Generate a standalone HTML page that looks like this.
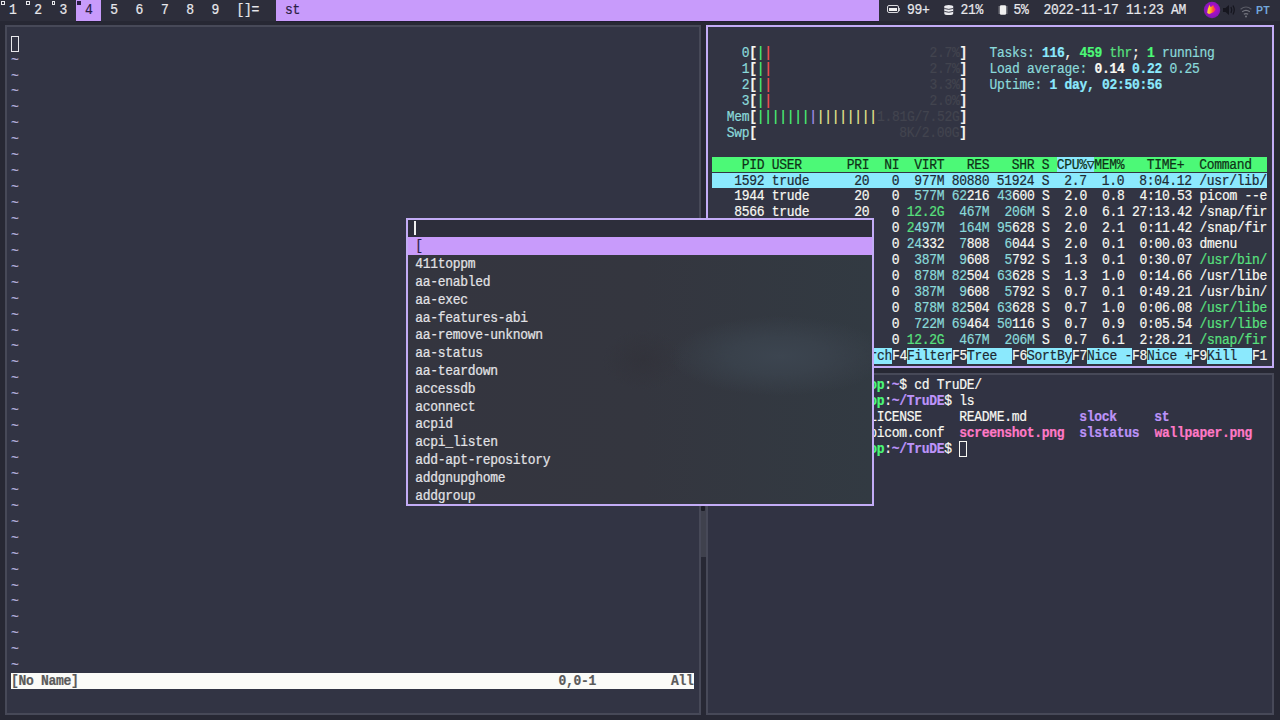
<!DOCTYPE html>
<html><head><meta charset="utf-8"><style>
html,body{margin:0;padding:0;width:1280px;height:720px;overflow:hidden;background:#272834;}
.r{position:absolute;white-space:pre;transform:scaleY(1.06);-webkit-text-stroke:0.2px currentColor;transform-origin:0 12px;font-family:"Liberation Mono",monospace;font-size:13px;letter-spacing:-0.3012px;line-height:15.9375px;color:#f8f8f2;}
</style></head><body>
<div style="position:absolute;left:0.000px;top:0.000px;width:1280.000px;height:20.625px;background:#2d2e3b"></div>
<div style="position:absolute;left:75.990px;top:0.000px;width:25.330px;height:20.625px;background:#c89bfb"></div>
<div class="r" style="left:8.915px;top:1.200px;line-height:20px"><span style="color:#e8e8ec">1</span></div>
<div class="r" style="left:34.245px;top:1.200px;line-height:20px"><span style="color:#e8e8ec">2</span></div>
<div class="r" style="left:59.575px;top:1.200px;line-height:20px"><span style="color:#e8e8ec">3</span></div>
<div class="r" style="left:84.905px;top:1.200px;line-height:20px"><span style="color:#2a1d45">4</span></div>
<div class="r" style="left:110.235px;top:1.200px;line-height:20px"><span style="color:#e8e8ec">5</span></div>
<div class="r" style="left:135.565px;top:1.200px;line-height:20px"><span style="color:#e8e8ec">6</span></div>
<div class="r" style="left:160.895px;top:1.200px;line-height:20px"><span style="color:#e8e8ec">7</span></div>
<div class="r" style="left:186.225px;top:1.200px;line-height:20px"><span style="color:#e8e8ec">8</span></div>
<div class="r" style="left:211.555px;top:1.200px;line-height:20px"><span style="color:#e8e8ec">9</span></div>
<div style="position:absolute;left:1.000px;top:1.000px;width:3.800px;height:3.800px;border:1px solid #e8e8ec;box-sizing:border-box"></div>
<div style="position:absolute;left:26.330px;top:1.000px;width:3.800px;height:3.800px;border:1px solid #e8e8ec;box-sizing:border-box"></div>
<div style="position:absolute;left:51.660px;top:1.000px;width:3.800px;height:3.800px;border:1px solid #e8e8ec;box-sizing:border-box"></div>
<div style="position:absolute;left:76.990px;top:1.000px;width:3.800px;height:3.800px;background:#2a1d45"></div>
<div class="r" style="left:236.500px;top:1.200px;line-height:20px"><span style="color:#e8e8ec">[]=</span></div>
<div style="position:absolute;left:276.000px;top:0.000px;width:603.000px;height:20.625px;background:#c89bfb"></div>
<div class="r" style="left:285.000px;top:1.200px;line-height:20px"><span style="color:#2a1d45">st</span></div>
<div class="r" style="left:907.000px;top:1.200px;line-height:20px"><span style="color:#e8e8ec">99+</span></div>
<div class="r" style="left:960.500px;top:1.200px;line-height:20px"><span style="color:#e8e8ec">21%</span></div>
<div class="r" style="left:1013.500px;top:1.200px;line-height:20px"><span style="color:#e8e8ec">5%</span></div>
<div class="r" style="left:1043.500px;top:1.200px;line-height:20px"><span style="color:#e8e8ec">2022-11-17 11:23 AM</span></div>
<div style="position:absolute;left:887.000px;top:5.300px;width:12.000px;height:8.000px;border:1.3px solid #d8d8dc;border-radius:2px;box-sizing:border-box"></div>
<div style="position:absolute;left:889.000px;top:7.800px;width:8.000px;height:3.000px;background:#f0f0f0"></div>
<div style="position:absolute;left:899.000px;top:7.800px;width:1.200px;height:3.000px;background:#b8b8bc"></div>
<svg style="position:absolute;left:944px;top:4.6px" width="9.5" height="10" viewBox="0 0 9.5 10"><path d="M0.3 1.6 Q0.3 0 4.75 0 Q9.2 0 9.2 1.6 V8.4 Q9.2 10 4.75 10 Q0.3 10 0.3 8.4Z" fill="#ececf0"/><path d="M0.3 3.5 Q4.75 5.2 9.2 3.5" stroke="#2d2e3b" stroke-width="0.9" fill="none"/><path d="M0.3 6.4 Q4.75 8.1 9.2 6.4" stroke="#2d2e3b" stroke-width="0.9" fill="none"/></svg>
<svg style="position:absolute;left:997.5px;top:4.5px" width="10" height="10" viewBox="0 0 10 10"><rect x="2" y="0.3" width="6" height="9.4" rx="1" fill="#f0f0f0"/><g stroke="#c8c8cc" stroke-width="0.9"><line x1="0.5" y1="2" x2="2" y2="2"/><line x1="0.5" y1="4" x2="2" y2="4"/><line x1="0.5" y1="6" x2="2" y2="6"/><line x1="0.5" y1="8" x2="2" y2="8"/><line x1="8" y1="2" x2="9.5" y2="2"/><line x1="8" y1="4" x2="9.5" y2="4"/><line x1="8" y1="6" x2="9.5" y2="6"/><line x1="8" y1="8" x2="9.5" y2="8"/></g></svg>
<svg style="position:absolute;left:1203px;top:1px" width="18" height="18" viewBox="0 0 18 18"><defs><radialGradient id="ffc" cx="0.55" cy="0.45" r="0.55"><stop offset="0" stop-color="#e0108a"/><stop offset="0.5" stop-color="#a010c8"/><stop offset="1" stop-color="#8018b0"/></radialGradient><linearGradient id="ffl" x1="0" y1="0" x2="1" y2="0"><stop offset="0" stop-color="#ffe23a"/><stop offset="0.4" stop-color="#ffb020"/><stop offset="0.7" stop-color="#ff5a30"/><stop offset="1" stop-color="#ff1a8a"/></linearGradient></defs><circle cx="9" cy="9" r="8.2" fill="url(#ffc)"/><path d="M4.2 11.8 Q4.4 8 5.8 5.5 L6.5 3.8 Q7.2 5.8 8 6.3 Q9 4.5 10.4 4.2 Q10.6 6.5 12.6 8.5 Q11.5 11 8.2 12.2 Q5.5 13.8 4.2 11.8Z" fill="url(#ffl)"/></svg>
<svg style="position:absolute;left:1222px;top:4px" width="14" height="12" viewBox="0 0 14 12"><path d="M1 4 H3.5 L7 1 V11 L3.5 8 H1Z" fill="#16161f"/><path d="M9 3 Q10.5 6 9 9" stroke="#16161f" stroke-width="1.3" fill="none"/><path d="M11 1.5 Q13.5 6 11 10.5" stroke="#16161f" stroke-width="1.3" fill="none"/></svg>
<svg style="position:absolute;left:1239.5px;top:4px" width="12" height="15" viewBox="0 0 12 15"><path d="M0.6 5.2 Q6 0.8 11.4 5.2" stroke="#5a5b66" stroke-width="1.2" fill="none"/><path d="M2.2 7.8 Q6 5 9.8 7.8" stroke="#74757f" stroke-width="1.2" fill="none"/><path d="M3.8 10.3 Q6 8.8 8.2 10.3" stroke="#74757f" stroke-width="1.2" fill="none"/><circle cx="6" cy="12.6" r="1" fill="#74757f"/></svg>
<div style="position:absolute;left:1256px;top:2.5px;font:bold 10.5px 'Liberation Sans',sans-serif;color:#72a6da;line-height:14px;letter-spacing:0.3px">PT</div>
<div style="position:absolute;left:5.000px;top:25.000px;width:696.000px;height:690.300px;background:#323444;border:2px solid #474958;box-sizing:border-box"></div>
<div style="position:absolute;left:705.700px;top:25.000px;width:568.600px;height:343.300px;background:#323443;border:2px solid #c3acf6;box-sizing:border-box"></div>
<div style="position:absolute;left:705.700px;top:373.200px;width:568.600px;height:342.100px;background:#313343;border:2px solid #474958;box-sizing:border-box"></div>
<div style="position:absolute;left:75.990px;top:20.625px;width:25.330px;height:1.400px;background:#221d33"></div>
<div style="position:absolute;left:276.000px;top:20.625px;width:603.000px;height:1.400px;background:#221d33"></div>
<div style="position:absolute;left:11.000px;top:35.625px;width:7.500px;height:15.938px;border:1px solid #e8e8ec;box-sizing:border-box"></div>
<div class="r" style="left:11.000px;top:52.562px;"><span style="color:#b4b0dc">~</span></div>
<div class="r" style="left:11.000px;top:68.500px;"><span style="color:#b4b0dc">~</span></div>
<div class="r" style="left:11.000px;top:84.438px;"><span style="color:#b4b0dc">~</span></div>
<div class="r" style="left:11.000px;top:100.375px;"><span style="color:#b4b0dc">~</span></div>
<div class="r" style="left:11.000px;top:116.312px;"><span style="color:#b4b0dc">~</span></div>
<div class="r" style="left:11.000px;top:132.250px;"><span style="color:#b4b0dc">~</span></div>
<div class="r" style="left:11.000px;top:148.188px;"><span style="color:#b4b0dc">~</span></div>
<div class="r" style="left:11.000px;top:164.125px;"><span style="color:#b4b0dc">~</span></div>
<div class="r" style="left:11.000px;top:180.062px;"><span style="color:#b4b0dc">~</span></div>
<div class="r" style="left:11.000px;top:196.000px;"><span style="color:#b4b0dc">~</span></div>
<div class="r" style="left:11.000px;top:211.938px;"><span style="color:#b4b0dc">~</span></div>
<div class="r" style="left:11.000px;top:227.875px;"><span style="color:#b4b0dc">~</span></div>
<div class="r" style="left:11.000px;top:243.812px;"><span style="color:#b4b0dc">~</span></div>
<div class="r" style="left:11.000px;top:259.750px;"><span style="color:#b4b0dc">~</span></div>
<div class="r" style="left:11.000px;top:275.688px;"><span style="color:#b4b0dc">~</span></div>
<div class="r" style="left:11.000px;top:291.625px;"><span style="color:#b4b0dc">~</span></div>
<div class="r" style="left:11.000px;top:307.562px;"><span style="color:#b4b0dc">~</span></div>
<div class="r" style="left:11.000px;top:323.500px;"><span style="color:#b4b0dc">~</span></div>
<div class="r" style="left:11.000px;top:339.438px;"><span style="color:#b4b0dc">~</span></div>
<div class="r" style="left:11.000px;top:355.375px;"><span style="color:#b4b0dc">~</span></div>
<div class="r" style="left:11.000px;top:371.312px;"><span style="color:#b4b0dc">~</span></div>
<div class="r" style="left:11.000px;top:387.250px;"><span style="color:#b4b0dc">~</span></div>
<div class="r" style="left:11.000px;top:403.188px;"><span style="color:#b4b0dc">~</span></div>
<div class="r" style="left:11.000px;top:419.125px;"><span style="color:#b4b0dc">~</span></div>
<div class="r" style="left:11.000px;top:435.062px;"><span style="color:#b4b0dc">~</span></div>
<div class="r" style="left:11.000px;top:451.000px;"><span style="color:#b4b0dc">~</span></div>
<div class="r" style="left:11.000px;top:466.938px;"><span style="color:#b4b0dc">~</span></div>
<div class="r" style="left:11.000px;top:482.875px;"><span style="color:#b4b0dc">~</span></div>
<div class="r" style="left:11.000px;top:498.812px;"><span style="color:#b4b0dc">~</span></div>
<div class="r" style="left:11.000px;top:514.750px;"><span style="color:#b4b0dc">~</span></div>
<div class="r" style="left:11.000px;top:530.688px;"><span style="color:#b4b0dc">~</span></div>
<div class="r" style="left:11.000px;top:546.625px;"><span style="color:#b4b0dc">~</span></div>
<div class="r" style="left:11.000px;top:562.562px;"><span style="color:#b4b0dc">~</span></div>
<div class="r" style="left:11.000px;top:578.500px;"><span style="color:#b4b0dc">~</span></div>
<div class="r" style="left:11.000px;top:594.438px;"><span style="color:#b4b0dc">~</span></div>
<div class="r" style="left:11.000px;top:610.375px;"><span style="color:#b4b0dc">~</span></div>
<div class="r" style="left:11.000px;top:626.312px;"><span style="color:#b4b0dc">~</span></div>
<div class="r" style="left:11.000px;top:642.250px;"><span style="color:#b4b0dc">~</span></div>
<div class="r" style="left:11.000px;top:658.188px;"><span style="color:#b4b0dc">~</span></div>
<div style="position:absolute;left:11.000px;top:673.125px;width:682.500px;height:15.938px;background:#fbfbf8"></div>
<div class="r" style="left:11.000px;top:674.125px;"><span style="color:#5a5a5a;font-weight:bold">[No Name]                                                                0,0-1          All</span></div>
<div class="r" style="left:711.800px;top:46.000px;"><span style="color:#8ad9da">    0</span><span style="font-weight:bold;color:#f8f8f2">[</span><span style="color:#4cf977">|</span><span style="color:#ff5555">|</span>                     <span style="color:#42444f">2.7%</span><span style="font-weight:bold;color:#f8f8f2">]</span><span style="color:#8ad9da">   Tasks: </span><span style="font-weight:bold;color:#8be9fd">116</span><span style="color:#f8f8f2">, </span><span style="font-weight:bold;color:#4cf977">459</span><span style="color:#58e07e"> thr</span><span style="color:#f8f8f2">; </span><span style="font-weight:bold;color:#4cf977">1</span><span style="color:#8ad9da"> running</span></div>
<div class="r" style="left:711.800px;top:61.938px;"><span style="color:#8ad9da">    1</span><span style="font-weight:bold;color:#f8f8f2">[</span><span style="color:#4cf977">|</span><span style="color:#ff5555">|</span>                     <span style="color:#42444f">2.7%</span><span style="font-weight:bold;color:#f8f8f2">]</span><span style="color:#8ad9da">   Load average: </span><span style="font-weight:bold;color:#f8f8f2">0.14 </span><span style="font-weight:bold;color:#8be9fd">0.22 </span><span style="color:#8ad9da">0.25</span></div>
<div class="r" style="left:711.800px;top:77.875px;"><span style="color:#8ad9da">    2</span><span style="font-weight:bold;color:#f8f8f2">[</span><span style="color:#4cf977">|</span><span style="color:#ff5555">|</span>                     <span style="color:#42444f">3.3%</span><span style="font-weight:bold;color:#f8f8f2">]</span><span style="color:#8ad9da">   Uptime: </span><span style="font-weight:bold;color:#8be9fd">1 day, 02:50:56</span></div>
<div class="r" style="left:711.800px;top:93.812px;"><span style="color:#8ad9da">    3</span><span style="font-weight:bold;color:#f8f8f2">[</span><span style="color:#4cf977">|</span><span style="color:#ff5555">|</span>                     <span style="color:#42444f">2.0%</span><span style="font-weight:bold;color:#f8f8f2">]</span></div>
<div class="r" style="left:711.800px;top:109.750px;"><span style="color:#8ad9da">  Mem</span><span style="font-weight:bold;color:#f8f8f2">[</span><span style="color:#4cf977">|||||||</span><span style="color:#a893f0">|</span><span style="color:#e8ec90">||||||||</span><span style="color:#42444f">1.81G/7.52G</span><span style="font-weight:bold;color:#f8f8f2">]</span></div>
<div class="r" style="left:711.800px;top:125.688px;"><span style="color:#8ad9da">  Swp</span><span style="font-weight:bold;color:#f8f8f2">[</span>                   <span style="color:#42444f">8K/2.00G</span><span style="font-weight:bold;color:#f8f8f2">]</span></div>
<div style="position:absolute;left:711.800px;top:156.562px;width:555.000px;height:15.938px;background:#4cf977"></div>
<div style="position:absolute;left:1056.800px;top:156.562px;width:37.500px;height:15.938px;background:#8be9fd"></div>
<div class="r" style="left:711.800px;top:157.562px;"><span style="color:#0f3218">    PID USER      PRI  NI  VIRT   RES   SHR S CPU%▽MEM%   TIME+  Command  </span></div>
<div style="position:absolute;left:711.800px;top:172.500px;width:555.000px;height:15.938px;background:#8be9fd"></div>
<div class="r" style="left:711.800px;top:173.500px;"><span style="color:#1d2a33">   1592 trude      20   0  977M 80880 51924 S  2.7  1.0  8:04.12 /usr/lib/</span></div>
<div class="r" style="left:711.800px;top:189.438px;"><span style="color:#f8f8f2">   1944 trude      20   0  </span><span style="color:#8ad9da">577M</span><span style="color:#f8f8f2"> </span><span style="color:#8ad9da">62</span><span style="color:#f8f8f2">216 </span><span style="color:#8ad9da">43</span><span style="color:#f8f8f2">600 S  2.0  0.8  4:10.53 picom --e</span></div>
<div class="r" style="left:711.800px;top:205.375px;"><span style="color:#f8f8f2">   8566 trude      20   0 </span><span style="color:#58e07e">12.2G</span><span style="color:#f8f8f2">  </span><span style="color:#8ad9da">467M</span><span style="color:#f8f8f2">  </span><span style="color:#8ad9da">206M</span><span style="color:#f8f8f2"> S  2.0  6.1 27:13.42 /snap/fir</span></div>
<div class="r" style="left:711.800px;top:221.312px;"><span style="color:#f8f8f2">   2497 trude      20   0 </span><span style="color:#58e07e">2</span><span style="color:#8ad9da">497M</span><span style="color:#f8f8f2">  </span><span style="color:#8ad9da">164M</span><span style="color:#f8f8f2"> </span><span style="color:#8ad9da">95</span><span style="color:#f8f8f2">628 S  2.0  2.1  0:11.42 /snap/fir</span></div>
<div class="r" style="left:711.800px;top:237.250px;"><span style="color:#f8f8f2">   4021 trude      20   0 </span><span style="color:#8ad9da">24</span><span style="color:#f8f8f2">332  </span><span style="color:#8ad9da">7</span><span style="color:#f8f8f2">808  </span><span style="color:#8ad9da">6</span><span style="color:#f8f8f2">044 S  2.0  0.1  0:00.03 dmenu</span></div>
<div class="r" style="left:711.800px;top:253.188px;"><span style="color:#f8f8f2">   1320 trude      20   0  </span><span style="color:#8ad9da">387M</span><span style="color:#f8f8f2">  </span><span style="color:#8ad9da">9</span><span style="color:#f8f8f2">608  </span><span style="color:#8ad9da">5</span><span style="color:#f8f8f2">792 S  1.3  0.1  0:30.07 </span><span style="color:#58e07e">/usr/bin/</span></div>
<div class="r" style="left:711.800px;top:269.125px;"><span style="color:#f8f8f2">   2201 trude      20   0  </span><span style="color:#8ad9da">878M</span><span style="color:#f8f8f2"> </span><span style="color:#8ad9da">82</span><span style="color:#f8f8f2">504 </span><span style="color:#8ad9da">63</span><span style="color:#f8f8f2">628 S  1.3  1.0  0:14.66 /usr/libe</span></div>
<div class="r" style="left:711.800px;top:285.062px;"><span style="color:#f8f8f2">   1318 trude      20   0  </span><span style="color:#8ad9da">387M</span><span style="color:#f8f8f2">  </span><span style="color:#8ad9da">9</span><span style="color:#f8f8f2">608  </span><span style="color:#8ad9da">5</span><span style="color:#f8f8f2">792 S  0.7  0.1  0:49.21 /usr/bin/</span></div>
<div class="r" style="left:711.800px;top:301.000px;"><span style="color:#f8f8f2">   2207 trude      20   0  </span><span style="color:#8ad9da">878M</span><span style="color:#f8f8f2"> </span><span style="color:#8ad9da">82</span><span style="color:#f8f8f2">504 </span><span style="color:#8ad9da">63</span><span style="color:#f8f8f2">628 S  0.7  1.0  0:06.08 </span><span style="color:#58e07e">/usr/libe</span></div>
<div class="r" style="left:711.800px;top:316.938px;"><span style="color:#f8f8f2">   2210 trude      20   0  </span><span style="color:#8ad9da">722M</span><span style="color:#f8f8f2"> </span><span style="color:#8ad9da">69</span><span style="color:#f8f8f2">464 </span><span style="color:#8ad9da">50</span><span style="color:#f8f8f2">116 S  0.7  0.9  0:05.54 </span><span style="color:#58e07e">/usr/libe</span></div>
<div class="r" style="left:711.800px;top:332.875px;"><span style="color:#f8f8f2">   8570 trude      20   0 </span><span style="color:#58e07e">12.2G</span><span style="color:#f8f8f2">  </span><span style="color:#8ad9da">467M</span><span style="color:#f8f8f2">  </span><span style="color:#8ad9da">206M</span><span style="color:#f8f8f2"> S  0.7  6.1  2:28.21 </span><span style="color:#58e07e">/snap/fir</span></div>
<div style="position:absolute;left:726.800px;top:347.812px;width:45.000px;height:15.938px;background:#8be9fd"></div>
<div style="position:absolute;left:786.800px;top:347.812px;width:45.000px;height:15.938px;background:#8be9fd"></div>
<div style="position:absolute;left:846.800px;top:347.812px;width:45.000px;height:15.938px;background:#8be9fd"></div>
<div style="position:absolute;left:906.800px;top:347.812px;width:45.000px;height:15.938px;background:#8be9fd"></div>
<div style="position:absolute;left:966.800px;top:347.812px;width:45.000px;height:15.938px;background:#8be9fd"></div>
<div style="position:absolute;left:1026.800px;top:347.812px;width:45.000px;height:15.938px;background:#8be9fd"></div>
<div style="position:absolute;left:1086.800px;top:347.812px;width:45.000px;height:15.938px;background:#8be9fd"></div>
<div style="position:absolute;left:1146.800px;top:347.812px;width:45.000px;height:15.938px;background:#8be9fd"></div>
<div style="position:absolute;left:1206.800px;top:347.812px;width:45.000px;height:15.938px;background:#8be9fd"></div>
<div style="position:absolute;left:1266.800px;top:347.812px;width:0.000px;height:15.938px;background:#8be9fd"></div>
<div class="r" style="left:711.800px;top:348.812px;"><span style="color:#f8f8f2">F1</span><span style="color:#1d2a33">Help  </span><span style="color:#f8f8f2">F2</span><span style="color:#1d2a33">Setup </span><span style="color:#f8f8f2">F3</span><span style="color:#1d2a33">Search</span><span style="color:#f8f8f2">F4</span><span style="color:#1d2a33">Filter</span><span style="color:#f8f8f2">F5</span><span style="color:#1d2a33">Tree  </span><span style="color:#f8f8f2">F6</span><span style="color:#1d2a33">SortBy</span><span style="color:#f8f8f2">F7</span><span style="color:#1d2a33">Nice -</span><span style="color:#f8f8f2">F8</span><span style="color:#1d2a33">Nice +</span><span style="color:#f8f8f2">F9</span><span style="color:#1d2a33">Kill  </span><span style="color:#f8f8f2">F1</span><span style="color:#1d2a33"></span></div>
<div class="r" style="left:711.800px;top:378.000px;">           <span style="font-weight:bold;color:#4cf977">trude@laptop</span><span style="color:#f8f8f2">:</span><span style="font-weight:bold;color:#bd93f9">~</span><span style="color:#f8f8f2">$ cd TruDE/</span></div>
<div class="r" style="left:711.800px;top:393.938px;">           <span style="font-weight:bold;color:#4cf977">trude@laptop</span><span style="color:#f8f8f2">:</span><span style="font-weight:bold;color:#bd93f9">~/TruDE</span><span style="color:#f8f8f2">$ ls</span></div>
<div class="r" style="left:711.800px;top:409.875px;">                     <span style="color:#f8f8f2">LICENSE     README.md       </span><span style="font-weight:bold;color:#bd93f9">slock</span><span style="color:#f8f8f2">     </span><span style="font-weight:bold;color:#bd93f9">st</span></div>
<div class="r" style="left:711.800px;top:425.812px;">                     <span style="color:#f8f8f2">picom.conf  </span><span style="font-weight:bold;color:#ff79c6">screenshot.png</span><span style="color:#f8f8f2">  </span><span style="font-weight:bold;color:#bd93f9">slstatus</span><span style="color:#f8f8f2">  </span><span style="font-weight:bold;color:#ff79c6">wallpaper.png</span></div>
<div class="r" style="left:711.800px;top:441.750px;">           <span style="font-weight:bold;color:#4cf977">trude@laptop</span><span style="color:#f8f8f2">:</span><span style="font-weight:bold;color:#bd93f9">~/TruDE</span><span style="color:#f8f8f2">$ </span></div>
<div style="position:absolute;left:959.300px;top:440.750px;width:7.500px;height:15.938px;border:1px solid #f8f8f2;box-sizing:border-box"></div>
<div style="position:absolute;left:701.000px;top:506.300px;width:4.800px;height:51.000px;background:#3f414d"></div>
<div style="position:absolute;left:701.300px;top:506.300px;width:4.000px;height:5.000px;background:#1c1d27;border-radius:1px"></div>
<div style="position:absolute;left:405.800px;top:217.600px;width:468.600px;height:288.700px;border:2px solid #c3acf6;box-sizing:border-box;background:radial-gradient(ellipse 110px 40px at 372px 136px,#3c4550 0%,#39414b 45%,rgba(52,54,63,0) 100%),radial-gradient(ellipse 40px 30px at 235px 140px,#32333b 0%,rgba(52,54,63,0) 100%),linear-gradient(90deg,#34353f 0%,#34363f 50%,#323a42 100%)"></div>
<div style="position:absolute;left:407.800px;top:219.500px;width:464.600px;height:17.812px;background:#2d2e3b"></div>
<div style="position:absolute;left:413.900px;top:221.200px;width:2.200px;height:13.800px;background:#f0f0f0"></div>
<div style="position:absolute;left:407.800px;top:237.312px;width:464.600px;height:17.812px;background:#c89bfb"></div>
<div class="r" style="left:415.200px;top:238.312px;line-height:17.8125px"><span style="color:#2a1d45">[</span></div>
<div class="r" style="left:415.200px;top:256.125px;line-height:17.8125px"><span style="color:#e2e2e6">411toppm</span></div>
<div class="r" style="left:415.200px;top:273.938px;line-height:17.8125px"><span style="color:#e2e2e6">aa-enabled</span></div>
<div class="r" style="left:415.200px;top:291.750px;line-height:17.8125px"><span style="color:#e2e2e6">aa-exec</span></div>
<div class="r" style="left:415.200px;top:309.562px;line-height:17.8125px"><span style="color:#e2e2e6">aa-features-abi</span></div>
<div class="r" style="left:415.200px;top:327.375px;line-height:17.8125px"><span style="color:#e2e2e6">aa-remove-unknown</span></div>
<div class="r" style="left:415.200px;top:345.188px;line-height:17.8125px"><span style="color:#e2e2e6">aa-status</span></div>
<div class="r" style="left:415.200px;top:363.000px;line-height:17.8125px"><span style="color:#e2e2e6">aa-teardown</span></div>
<div class="r" style="left:415.200px;top:380.812px;line-height:17.8125px"><span style="color:#e2e2e6">accessdb</span></div>
<div class="r" style="left:415.200px;top:398.625px;line-height:17.8125px"><span style="color:#e2e2e6">aconnect</span></div>
<div class="r" style="left:415.200px;top:416.438px;line-height:17.8125px"><span style="color:#e2e2e6">acpid</span></div>
<div class="r" style="left:415.200px;top:434.250px;line-height:17.8125px"><span style="color:#e2e2e6">acpi_listen</span></div>
<div class="r" style="left:415.200px;top:452.062px;line-height:17.8125px"><span style="color:#e2e2e6">add-apt-repository</span></div>
<div class="r" style="left:415.200px;top:469.875px;line-height:17.8125px"><span style="color:#e2e2e6">addgnupghome</span></div>
<div class="r" style="left:415.200px;top:487.688px;line-height:17.8125px"><span style="color:#e2e2e6">addgroup</span></div>
</body></html>
